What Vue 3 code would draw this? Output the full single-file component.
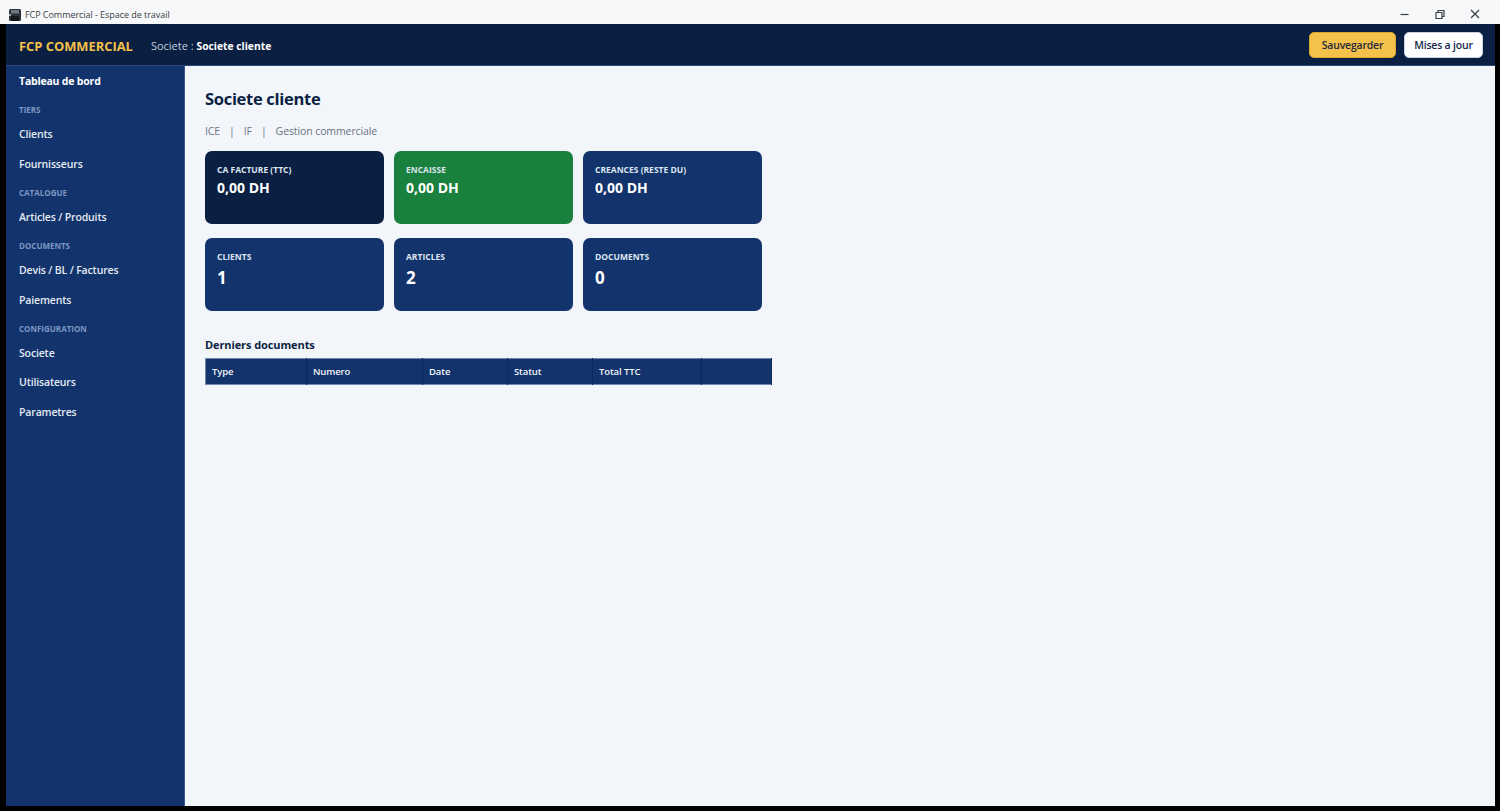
<template>
  <div class="window">
    <div class="titlebar">
      <div class="titlebar__left">
        <svg class="app-icon" width="12" height="12" viewBox="0 0 12 12">
          <rect x="0" y="0" width="12" height="12" rx="1.5" fill="#2b3138" />
          <rect x="2" y="1" width="8" height="3.5" fill="#6f7880" />
          <rect x="2" y="7" width="8" height="5" fill="#14181c" />
          <rect x="0" y="5" width="2" height="2" fill="#9aa3ab" />
        </svg>
        <span>FCP Commercial - Espace de travail</span>
      </div>
      <div class="titlebar__controls">
        <svg width="12" height="12" viewBox="0 0 12 12"><path d="M1.5 6.5h8" stroke="#3a3f45" stroke-width="1.2" fill="none" /></svg>
        <svg width="12" height="12" viewBox="0 0 12 12"><path d="M2 4.5h6v6H2zM4 4.5V2.5h6v6H8" stroke="#3a3f45" stroke-width="1.2" fill="none" /></svg>
        <svg width="12" height="12" viewBox="0 0 12 12"><path d="M2 2l8 8M10 2l-8 8" stroke="#3a3f45" stroke-width="1.2" fill="none" /></svg>
      </div>
    </div>

    <div class="app">
      <header class="topbar">
        <div class="topbar__left">
          <span class="brand">FCP COMMERCIAL</span>
          <span class="company">Societe : <b>Societe cliente</b></span>
        </div>
        <div class="topbar__actions">
          <button class="btn btn--save">Sauvegarder</button>
          <button class="btn btn--update">Mises a jour</button>
        </div>
      </header>

      <div class="body">
        <aside class="sidebar">
          <template v-for="item in menu" :key="item.label">
            <div v-if="item.section" class="sidebar__section">{{ item.label }}</div>
            <a v-else class="sidebar__link" :class="{ 'is-active': item.active }">{{ item.label }}</a>
          </template>
        </aside>

        <main class="main">
          <h1 class="main__title">Societe cliente</h1>
          <p class="main__sub">
            <span>ICE</span><span>|</span><span>IF</span><span>|</span><span>Gestion commerciale</span>
          </p>

          <div class="cards">
            <div v-for="card in cards" :key="card.title" class="card" :class="card.kind">
              <div class="card__title">{{ card.title }}</div>
              <div class="card__value">{{ card.value }}</div>
            </div>
          </div>

          <h2 class="section-title">Derniers documents</h2>
          <table class="doc-table">
            <thead>
              <tr>
                <th v-for="col in columns" :key="col.name" :style="{ width: col.width + 'px' }">{{ col.name }}</th>
              </tr>
            </thead>
          </table>
        </main>
      </div>
    </div>
  </div>
</template>

<script setup>
const menu = [
  { label: "Tableau de bord", active: true },
  { label: "TIERS", section: true },
  { label: "Clients" },
  { label: "Fournisseurs" },
  { label: "CATALOGUE", section: true },
  { label: "Articles / Produits" },
  { label: "DOCUMENTS", section: true },
  { label: "Devis / BL / Factures" },
  { label: "Paiements" },
  { label: "CONFIGURATION", section: true },
  { label: "Societe" },
  { label: "Utilisateurs" },
  { label: "Parametres" },
]

const cards = [
  { title: "CA FACTURE (TTC)", value: "0,00 DH", kind: "card--dark" },
  { title: "ENCAISSE", value: "0,00 DH", kind: "card--green" },
  { title: "CREANCES (RESTE DU)", value: "0,00 DH", kind: "" },
  { title: "CLIENTS", value: "1", kind: "card--big" },
  { title: "ARTICLES", value: "2", kind: "card--big" },
  { title: "DOCUMENTS", value: "0", kind: "card--big" },
]

const columns = [
  { name: "Type", width: 101 },
  { name: "Numero", width: 116 },
  { name: "Date", width: 85 },
  { name: "Statut", width: 85 },
  { name: "Total TTC", width: 109 },
  { name: "", width: 70 },
]
</script>

<style>
html, body {
  margin: 0;
  background: #000;
}
</style>

<style scoped>
.window {
  width: 1500px;
  height: 811px;
  background: #000;
  display: flex;
  flex-direction: column;
  font-family: "Open Sans", "Noto Sans", sans-serif;
  overflow: hidden;
}

.titlebar {
  height: 24px;
  flex: none;
  box-sizing: border-box;
  padding-top: 4px;
  background: #f7f8f9;
  display: flex;
  align-items: center;
  justify-content: space-between;
  font-size: 9px;
  letter-spacing: -0.05px;
  color: #3a3f45;
}

.titlebar__left {
  display: flex;
  align-items: center;
  gap: 4px;
  padding-left: 9px;
  margin-top: 1px;
}

.titlebar__controls {
  display: flex;
  gap: 23px;
  padding-right: 19px;
}

.app {
  flex: 1;
  min-height: 0;
  margin: 0 5px 5px 6px;
  display: flex;
  flex-direction: column;
}

.topbar {
  height: 42px;
  flex: none;
  box-sizing: border-box;
  background: #0b1f42;
  border-bottom: 1px solid #2a4675;
  display: flex;
  align-items: center;
  justify-content: space-between;
  padding: 0 12px 0 13px;
}

.topbar__left {
  display: flex;
  align-items: center;
  gap: 18px;
  padding-top: 2px;
}

.brand {
  color: #f4c14a;
  font-size: 12.9px;
  font-weight: 700;
}

.company {
  color: #c3cede;
  font-size: 11px;
}

.company b {
  color: #fff;
  font-size: 10.3px;
  font-weight: 700;
}

.topbar__actions {
  display: flex;
  gap: 8px;
}

.btn {
  height: 26px;
  border-radius: 5px;
  font-family: inherit;
  font-size: 10.5px;
  letter-spacing: -0.2px;
  font-weight: 600;
  padding: 0;
  cursor: pointer;
}

.btn--save {
  width: 87px;
  background: #f4c14a;
  border: 1px solid #d9a730;
  color: #1f2a3d;
}

.btn--update {
  width: 79px;
  background: #fff;
  border: 1px solid #c9d2df;
  color: #14284b;
}

.body {
  flex: 1;
  min-height: 0;
  display: flex;
}

.sidebar {
  width: 179px;
  flex: none;
  box-sizing: border-box;
  background: #12336b;
  border-right: 1px solid #3a5a8f;
  display: flex;
  flex-direction: column;
}

.sidebar__link {
  height: 29.6px;
  display: flex;
  align-items: center;
  padding-left: 13px;
  color: #e4eaf3;
  font-size: 10.5px;
  letter-spacing: -0.15px;
  font-weight: 600;
}

.sidebar__link.is-active {
  color: #fff;
  font-weight: 700;
  letter-spacing: -0.2px;
}

.sidebar__section {
  height: 23.6px;
  box-sizing: border-box;
  padding: 4px 0 0 13px;
  display: flex;
  align-items: center;
  color: #7d97c4;
  font-size: 8px;
  font-weight: 700;
}

.main {
  flex: 1;
  min-width: 0;
  background: #f2f5fa;
  padding: 0 20px;
}

.main__title {
  margin: 21px 0 0;
  height: 24px;
  line-height: 24px;
  font-size: 16.5px;
  letter-spacing: -0.3px;
  font-weight: 700;
  color: #0b1f42;
}

.main__sub {
  margin: 12px 0 0;
  height: 16px;
  line-height: 16px;
  font-size: 10.5px;
  letter-spacing: -0.1px;
  color: #6b7684;
  display: flex;
  gap: 9px;
}

.cards {
  margin-top: 12px;
  display: grid;
  grid-template-columns: repeat(3, 179px);
  grid-auto-rows: 73px;
  column-gap: 10px;
  row-gap: 14px;
}

.card {
  box-sizing: border-box;
  background: #12336b;
  border-radius: 7px;
  padding: 13px 12px;
  color: #fff;
}

.card--dark {
  background: #0b1f42;
}

.card--green {
  background: #1a803d;
}

.card__title {
  font-size: 8.5px;
  line-height: 12px;
  font-weight: 700;
  color: #dde5f0;
}

.card__value {
  margin-top: 2px;
  font-size: 14px;
  line-height: 20px;
  font-weight: 700;
}

.card--big .card__value {
  margin-top: 3px;
  font-size: 17px;
  line-height: 24px;
}

.section-title {
  margin: 26px 0 0;
  height: 16px;
  line-height: 16px;
  font-size: 11px;
  letter-spacing: -0.1px;
  font-weight: 700;
  color: #0b1f42;
}

.doc-table {
  margin-top: 5px;
  width: 566px;
  table-layout: fixed;
  border-collapse: collapse;
  background: #12336b;
  border: 1px solid #6f88b0;
}

.doc-table th {
  height: 26px;
  padding: 0 6px;
  box-sizing: border-box;
  text-align: left;
  color: #f1f4f9;
  font-size: 9.5px;
  letter-spacing: -0.1px;
  font-weight: 600;
  border-right: 1px solid #0b2a5c;
}
</style>
